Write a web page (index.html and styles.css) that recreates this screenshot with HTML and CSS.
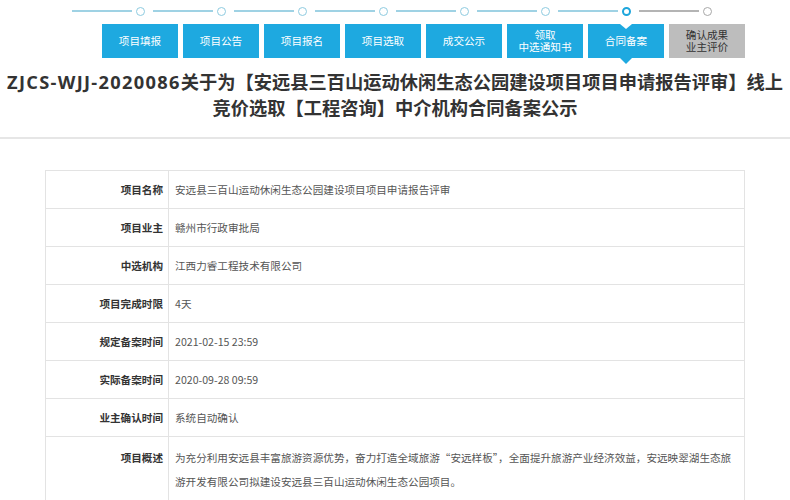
FILE: index.html
```html
<!DOCTYPE html>
<html lang="zh-CN">
<head>
<meta charset="utf-8">
<title>合同备案公示</title>
<link rel="stylesheet" href="styles.css">
</head>
<body>
<header class="head">
  <ol class="steps">
    <li class="step"><span class="track"><i class="seg"></i><i class="dot"></i></span><span class="btn">项目填报</span></li>
    <li class="step"><span class="track"><i class="seg"></i><i class="dot"></i></span><span class="btn">项目公告</span></li>
    <li class="step"><span class="track"><i class="seg"></i><i class="dot"></i></span><span class="btn">项目报名</span></li>
    <li class="step"><span class="track"><i class="seg"></i><i class="dot"></i></span><span class="btn">项目选取</span></li>
    <li class="step"><span class="track"><i class="seg"></i><i class="dot"></i></span><span class="btn">成交公示</span></li>
    <li class="step"><span class="track"><i class="seg"></i><i class="dot"></i></span><span class="btn two">领取<br>中选通知书</span></li>
    <li class="step current"><span class="track"><i class="seg"></i><i class="dot"></i></span><span class="btn">合同备案</span></li>
    <li class="step todo"><span class="track"><i class="seg"></i><i class="dot"></i></span><span class="btn two">确认成果<br>业主评价</span></li>
  </ol>
  <h1 class="title"><span class="code">ZJCS-WJJ-2020086</span>关于为【安远县三百山运动休闲生态公园建设项目项目申请报告评审】线上竞价选取【工程咨询】中介机构合同备案公示</h1>
</header>
<table class="info">
  <tr><th>项目名称</th><td>安远县三百山运动休闲生态公园建设项目项目申请报告评审</td></tr>
  <tr><th>项目业主</th><td>赣州市行政审批局</td></tr>
  <tr><th>中选机构</th><td>江西力睿工程技术有限公司</td></tr>
  <tr><th>项目完成时限</th><td>4天</td></tr>
  <tr><th>规定备案时间</th><td>2021-02-15 23:59</td></tr>
  <tr><th>实际备案时间</th><td>2020-09-28 09:59</td></tr>
  <tr><th>业主确认时间</th><td>系统自动确认</td></tr>
  <tr class="long"><th>项目概述</th><td>为充分利用安远县丰富旅游资源优势，奋力打造全域旅游“安远样板”，全面提升旅游产业经济效益，安远映翠湖生态旅游开发有限公司拟建设安远县三百山运动休闲生态公园项目。</td></tr>
</table>
</body>
</html>
```

FILE: styles.css
```css
* { box-sizing: border-box; }
html, body { margin: 0; padding: 0; background: #fff; }
body {
  font-family: "Noto Sans CJK SC", "Open Sans", sans-serif;
  font-size: 10.6px;
  color: #555;
}

.head {
  border-bottom: 2px solid #e6e6e6;
  padding-bottom: 16px;
}

.steps {
  list-style: none;
  margin: 0 auto;
  padding: 0;
  width: 700px;
  display: flex;
  justify-content: flex-end;
}
.step {
  width: 76px;
  margin-left: 5px;
  display: flex;
  flex-direction: column;
}
.track {
  display: flex;
  align-items: center;
  height: 22px;
  margin-left: -30px;
}
.seg {
  display: block;
  width: 60px;
  height: 2px;
  background: #9fd2e4;
}
.dot {
  display: block;
  width: 9px;
  height: 9px;
  margin-left: 4px;
  border: 1.5px solid #8ecbe0;
  border-radius: 50%;
  background: #fff;
}
.current .dot { border: 2.5px solid #1ea6dc; }
.todo .seg { background: #b4b4b4; }
.todo .dot { border-color: #a8a8a8; }

.btn {
  position: relative;
  margin-top: 2px;
  height: 34px;
  background: #1ea9e0;
  color: #fff;
  display: flex;
  align-items: center;
  justify-content: center;
  text-align: center;
  line-height: 14px;
}
.btn.two { line-height: 12px; }
.todo .btn { background: #bdbdbd; color: #333; }
.current .btn::before {
  content: "";
  position: absolute;
  top: 0;
  left: 50%;
  margin-left: -6px;
  border-left: 6px solid transparent;
  border-right: 6px solid transparent;
  border-top: 5px solid #fff;
}
.current .btn::after {
  content: "";
  position: absolute;
  top: 100%;
  left: 50%;
  margin-left: -6px;
  border-left: 6px solid transparent;
  border-right: 6px solid transparent;
  border-top: 6px solid #1ea9e0;
}

.title {
  margin: 11px 0 0;
  padding: 0 6px;
  text-align: center;
  font-family: "Open Sans", "Noto Sans CJK SC", sans-serif;
  font-weight: bold;
  font-size: 18.25px;
  line-height: 26px;
  color: #333;
}
.title .code { letter-spacing: 1.3px; }

.info {
  width: 700px;
  margin: 31px auto 0;
  border-collapse: collapse;
}
.info th, .info td {
  border: 1px solid #e3e3e3;
  height: 38px;
  line-height: 16px;
}
.info th {
  width: 123px;
  padding: 0 5px 0 0;
  text-align: right;
  font-weight: bold;
  color: #333;
}
.info td {
  padding: 0 6px 0 6px;
  text-align: left;
  color: #555;
}
.info .long th, .info .long td {
  vertical-align: top;
  padding-top: 9px;
  padding-bottom: 9px;
  line-height: 24px;
}
```
